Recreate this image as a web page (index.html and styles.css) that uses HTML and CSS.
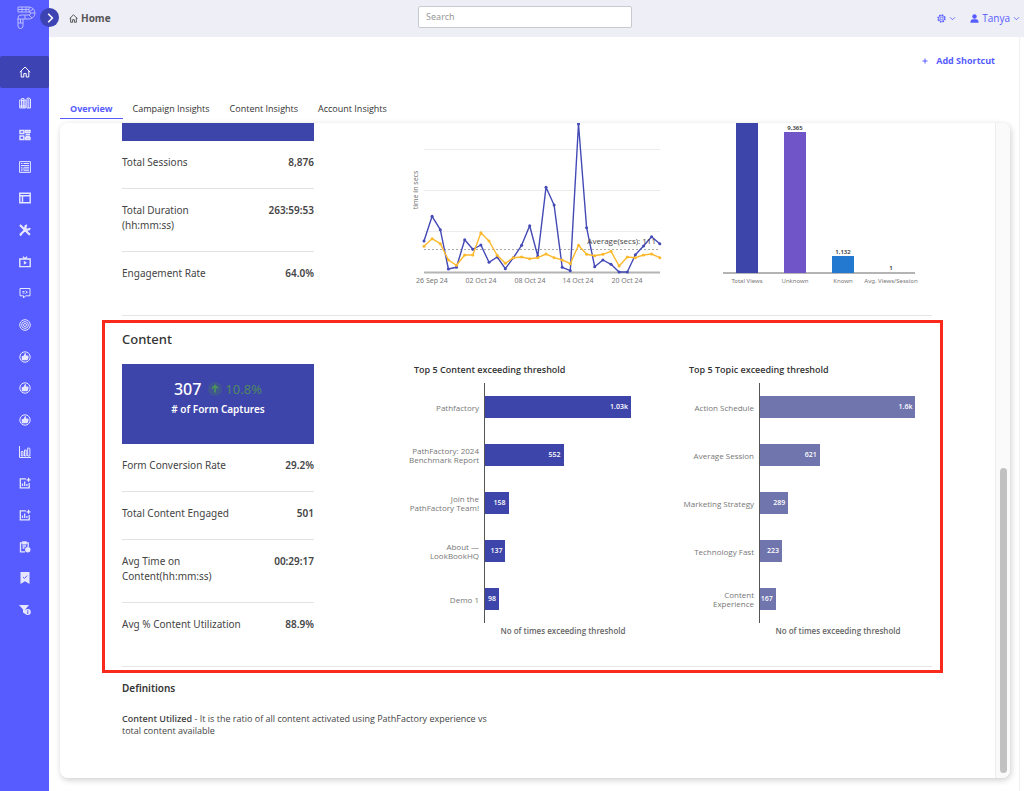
FILE: index.html
```html
<!DOCTYPE html>
<html lang="en">
<head>
<meta charset="utf-8">
<meta name="viewport" content="width=device-width, initial-scale=1">
<title>Home</title>
<link rel="stylesheet" href="styles.css">
</head>
<body>
<div class="app">
  <aside class="sidebar">
    <svg class="logo" viewBox="0 0 20 24" aria-label="Logo"><path d="M1 1h11a6 6 0 0 1 0 12H6v7a2.500 2.500 0 0 1-5 0v-7h5M1 1v5h11a1.500 1.500 0 0 1 0 3H4a3 3 0 0 0-3 3v2M5 1v5M9 1v5M12 1v5l4-3M13 7l5 0M12 9l3 3M8 9v4M1 17h5M3.500 13v4M1 3.500h11"/></svg>
    <button class="toggle" aria-label="Expand menu"><svg viewBox="0 0 10 10"><path d="M3.500 1.500 7 5 3.500 8.500"/></svg></button>
    <nav class="nav" aria-label="Main">
      <a href="#" class="nav-item active" aria-label="Home"><svg class="icon" viewBox="0 0 12 12"><path d="M.8 6.200 6 1l5.200 5.200M2.200 5v6h2.600V7.600h2.400V11h2.600V5"/></svg></a>
      <a href="#" class="nav-item" aria-label="Library"><svg class="icon" viewBox="0 0 12 12"><path d="M.7 3h2v8h-2zM2.700 1.500h2.200V11H2.700zM4.900 3h2v8h-2zM8 1.300l2-.3 1.500 1V11H8zM.7 9h6.200M2.700 3.500h2.200M9.800 2v9"/></svg></a>
      <a href="#" class="nav-item" aria-label="Boards"><svg class="icon bold" viewBox="0 0 12 12"><path d="M1 1.500h3.800v3H1zM1 7h3.800v3.500H1zM6.500 1.500H11v1.800H6.500zM6.500 5.200H11M6.500 7.200H11M6.500 8.800H11v1.700H6.500z"/></svg></a>
      <a href="#" class="nav-item" aria-label="Forms"><svg class="icon" viewBox="0 0 12 12"><path d="M.6.600h10.800v10.800H.6zM2 2.500h1.500M4.500 2.500H10M2 4.500h8M2 6.300h1.500M4.500 6.300H10M2 8h8M2 9.700h1.500M4.500 9.700H10"/></svg></a>
      <a href="#" class="nav-item" aria-label="Pages"><svg class="icon bold" viewBox="0 0 12 12"><path d="M.8 1.300h10.400v9.400H.8zM.8 3.800h10.400M3.500 4v6.500"/></svg></a>
      <a href="#" class="nav-item" aria-label="Tools"><svg class="icon heavy" viewBox="0 0 12 12"><path d="M1.200 1.200 10.800 10.800M1.200 10.800 7.500 4.500M8 1.200a2.300 2.300 0 1 0 2.800 2.800M1 2.400 2.400 1M1 10l1.500 1.400M9.500 10.800l1.300-1.300"/></svg></a>
      <a href="#" class="nav-item" aria-label="Videos"><svg class="icon bold" viewBox="0 0 12 12"><path d="M.8 3h10.400v7.600H.8zM4 .6 6 3 8 .6"/><path class="fill" d="M4.800 4.800v4L8 6.800z"/></svg></a>
      <a href="#" class="nav-item" aria-label="Messages"><svg class="icon" viewBox="0 0 12 12"><path d="M1 1.500h10v7.300H6.500L4.500 11V8.800H1zM3.500 4.500h2M3.500 6h2M6.500 3.700 8 5.200 6.500 6.700M7 5.200h1.500"/></svg></a>
      <a href="#" class="nav-item" aria-label="Targets"><svg class="icon" viewBox="0 0 12 12"><circle cx="6" cy="6" r="5.300"/><circle cx="6" cy="6" r="3.400"/><circle cx="6" cy="6" r="1.500"/></svg></a>
      <a href="#" class="nav-item" aria-label="Likes"><svg class="icon" viewBox="0 0 12 12"><circle cx="6" cy="6" r="5.200"/><path class="fill" d="M2.800 5h1.700L6 2c1.300.1 1.200 1.200.8 2.500h2.400c.8.900.1 4.300-1.100 4.800H2.800z"/></svg></a>
      <a href="#" class="nav-item" aria-label="Recommendations"><svg class="icon" viewBox="0 0 12 12"><circle cx="6" cy="6" r="5.200"/><path class="fill" d="M2.800 5h1.700L6 2c1.300.1 1.200 1.200.8 2.500h2.400c.8.900.1 4.300-1.100 4.800H2.800z"/></svg></a>
      <a href="#" class="nav-item" aria-label="Engagement"><svg class="icon" viewBox="0 0 12 12"><circle cx="6" cy="6" r="5.200"/><path class="fill" d="M2.800 5h1.700L6 2c1.300.1 1.200 1.200.8 2.500h2.400c.8.900.1 4.300-1.100 4.800H2.800z"/></svg></a>
      <a href="#" class="nav-item" aria-label="Analytics"><svg class="icon" viewBox="0 0 12 12"><path d="M.5 0v11.500h11.500M2.300 5.500h1.700v4.500H2.300zM5.500 4h1.700v6H5.500zM8.700 2h1.200a1 1 0 0 1 1 1V10H8.700z"/></svg></a>
      <a href="#" class="nav-item" aria-label="Reports"><svg class="icon" viewBox="0 0 12 12"><path class="mid" d="M7 1.800H1.300v9h8.900V6M3.500 9V6.500M5.700 9V4.500M7.900 9V7M9.500.8v4M7.500 2.800h4"/></svg></a>
      <a href="#" class="nav-item" aria-label="Custom reports"><svg class="icon" viewBox="0 0 12 12"><path class="mid" d="M7 1.800H1.300v9h8.900V6M3.500 9V6.500M5.700 9V4.500M7.900 9V7M9.500.8v4M7.500 2.800h4"/></svg></a>
      <a href="#" class="nav-item" aria-label="Tasks"><svg class="icon" viewBox="0 0 12 12"><path class="mid" d="M6 10.800H1.500V1.800h7.700V6M3.800.8H7v2H3.800zM3.500 5H7M3.500 7h2"/><circle class="fill" cx="8.800" cy="8.800" r="2.700"/></svg></a>
      <a href="#" class="nav-item" aria-label="Bookmarks"><svg class="icon" viewBox="0 0 12 12"><path class="fill" d="M1.500 0h9v12L6 9.300 1.500 12z"/><path class="cut" d="M4 5l1.500 1.400L8.200 3.600"/></svg></a>
      <a href="#" class="nav-item" aria-label="Filters"><svg class="icon" viewBox="0 0 12 12"><path class="fill" d="M0 1h10L6.500 5.200v5L4 8.500V5.500z"/><circle class="fill" cx="8.800" cy="8" r="3"/><path class="cut" d="M8.800 6.200V10"/></svg></a>
    </nav>
  </aside>

  <div class="main">
    <header class="topbar">
      <h1 class="crumb"><svg class="icon" viewBox="0 0 12 12"><path d="M.8 6.200 6 1l5.200 5.200M2.200 5v6h2.600V7.600h2.400V11h2.600V5"/></svg>Home</h1>
      <input class="search" type="search" placeholder="Search" aria-label="Search">
      <div class="account">
        <button class="link" aria-label="Settings">
          <svg class="icon" viewBox="0 0 12 12"><circle class="cog" cx="6" cy="6" r="4.600"/><circle cx="6" cy="6" r="3.800"/><circle cx="6" cy="6" r="1.700"/></svg>
          <svg class="caret" viewBox="0 0 8 6"><path d="M1 1.500 4 4.500 7 1.500"/></svg>
        </button>
        <button class="link">
          <svg class="icon" viewBox="0 0 12 12"><circle class="fill" cx="6" cy="3.400" r="3"/><path class="fill" d="M.5 11.800C.5 8.500 2 7 4 7h4c2 0 3.500 1.500 3.500 4.800z"/></svg>
          <span class="user">Tanya</span>
          <svg class="caret" viewBox="0 0 8 6"><path d="M1 1.500 4 4.500 7 1.500"/></svg>
        </button>
      </div>
    </header>

    <main class="page">
      <div class="actions"><button class="link strong"><svg class="plus" viewBox="0 0 6 6"><path d="M3 .5v5M.5 3h5"/></svg>Add Shortcut</button></div>
      <nav class="tabs" aria-label="Insights">
        <a href="#" class="tab current">Overview</a>
        <a href="#" class="tab">Campaign Insights</a>
        <a href="#" class="tab">Content Insights</a>
        <a href="#" class="tab">Account Insights</a>
      </nav>

      <div class="panel">
        <div class="scroll-area">
          <section class="section sessions">
            <div class="stats">
              <div class="card-end"></div>
              <dl class="stat-list">
                <div class="stat"><dt>Total Sessions</dt><dd>8,876</dd></div>
                <div class="stat"><dt>Total Duration (hh:mm:ss)</dt><dd>263:59:53</dd></div>
                <div class="stat"><dt>Engagement Rate</dt><dd>64.0%</dd></div>
              </dl>
            </div>
            <div class="trend-charts">
              <svg class="line-chart" viewBox="10 8 256 165" role="img" aria-label="Session time in seconds by day">
                <defs>
                  <marker id="dot-blue" markerWidth="4" markerHeight="4" refX="2" refY="2" markerUnits="userSpaceOnUse"><circle class="dot-blue" cx="2" cy="2" r="1.500"/></marker>
                  <marker id="dot-gold" markerWidth="4" markerHeight="4" refX="2" refY="2" markerUnits="userSpaceOnUse"><circle class="dot-gold" cx="2" cy="2" r="1.500"/></marker>
                </defs>
                <path class="gridline" d="M24 34.500h236M24 75.500h236M24 116.500h236"/>
                <path class="base" d="M24 157.500h236"/>
                <path class="average" d="M24 134.500h236"/>
                <polyline class="series blue" points="24,126 32.1,101.3 40.3,114.7 48.4,154 56.5,152.3 64.7,124.7 72.8,134.3 80.9,130 89,147.3 97.2,142 105.3,153.7 113.4,142.7 121.6,130.3 129.7,110.7 137.8,141.3 146,72.3 154.1,90 162.2,152.3 170.3,155.7 178.5,9 186.6,112.7 194.7,151.7 202.9,145 211,149.3 219.1,157 227.3,157 235.4,139.7 243.5,131 251.6,121.7 259.8,128.7"/>
                <polyline class="series gold" points="24,131.3 32.1,123.7 40.3,128.7 48.4,145 56.5,150.3 64.7,140 72.8,140 80.9,117.7 89,126 97.2,140.3 105.3,148.3 113.4,142.7 121.6,142 129.7,143.7 137.8,142.7 146,139 154.1,142.7 162.2,145 170.3,148.7 178.5,130.3 186.6,139.3 194.7,140.7 202.9,139.3 211,136.3 219.1,151 227.3,142 235.4,142.7 243.5,140 251.6,139 259.8,142.7"/>
                <text class="note" x="256" y="129" text-anchor="end">Average(secs): 111</text>
                <text class="tick" transform="translate(18 75) rotate(-90)" text-anchor="middle">time in secs</text>
                <g class="tick" text-anchor="middle"><text x="32" y="168">26 Sep 24</text><text x="81" y="168">02 Oct 24</text><text x="130" y="168">08 Oct 24</text><text x="178" y="168">14 Oct 24</text><text x="227" y="168">20 Oct 24</text></g>
              </svg>
              <svg class="bar-chart" viewBox="0 0 200 165" role="img" aria-label="Views by visitor type">
                <path class="base" d="M5 150h192"/>
                <rect class="total" x="18" y="0" width="22" height="150"/>
                <rect class="unknown" x="66" y="9" width="22" height="141"/>
                <rect class="known" x="114" y="133" width="22" height="17"/>
                <g class="value" text-anchor="middle"><text x="77" y="7">9,365</text><text x="125" y="131">1,132</text><text x="173" y="147">1</text></g>
                <g class="tick small" text-anchor="middle"><text x="29" y="160">Total Views</text><text x="77" y="160">Unknown</text><text x="125" y="160">Known</text><text x="173" y="160">Avg. Views/Session</text></g>
              </svg>
            </div>
          </section>

          <section class="section content">
            <h2 class="title">Content</h2>
            <div class="columns">
              <div class="stats">
                <div class="card">
                  <div class="card-figures"><strong class="figure">307</strong><svg class="up" viewBox="0 0 14 14"><circle cx="7" cy="7" r="7"/><path d="M7 10.500v-7M4 6.500l3-3 3 3"/></svg><span class="change">10.8%</span></div>
                  <div class="card-label"># of Form Captures</div>
                </div>
                <dl class="stat-list">
                  <div class="stat"><dt>Form Conversion Rate</dt><dd>29.2%</dd></div>
                  <div class="stat"><dt>Total Content Engaged</dt><dd>501</dd></div>
                  <div class="stat"><dt>Avg Time on Content(hh:mm:ss)</dt><dd>00:29:17</dd></div>
                  <div class="stat"><dt>Avg % Content Utilization</dt><dd>88.9%</dd></div>
                </dl>
              </div>
              <div class="rank-charts">
                <figure class="rank">
                  <h3 class="rank-title">Top 5 Content exceeding threshold</h3>
                  <div class="rows">
                    <div class="row"><span class="name">Pathfactory</span><div class="plot"><div class="bar" style="width:93%">1.03k</div></div></div>
                    <div class="row"><span class="name">PathFactory: 2024<br>Benchmark Report</span><div class="plot"><div class="bar" style="width:50%">552</div></div></div>
                    <div class="row"><span class="name">Join the<br>PathFactory Team!</span><div class="plot"><div class="bar" style="width:15%">158</div></div></div>
                    <div class="row"><span class="name">About —<br>LookBookHQ</span><div class="plot"><div class="bar" style="width:13%">137</div></div></div>
                    <div class="row"><span class="name">Demo 1</span><div class="plot"><div class="bar" style="width:9%">98</div></div></div>
                  </div>
                  <figcaption class="axis-label">No of times exceeding threshold</figcaption>
                </figure>
                <figure class="rank topics">
                  <h3 class="rank-title">Top 5 Topic exceeding threshold</h3>
                  <div class="rows">
                    <div class="row"><span class="name">Action Schedule</span><div class="plot"><div class="bar" style="width:99%">1.6k</div></div></div>
                    <div class="row"><span class="name">Average Session</span><div class="plot"><div class="bar" style="width:38%">621</div></div></div>
                    <div class="row"><span class="name">Marketing Strategy</span><div class="plot"><div class="bar" style="width:18%">289</div></div></div>
                    <div class="row"><span class="name">Technology Fast</span><div class="plot"><div class="bar" style="width:14%">223</div></div></div>
                    <div class="row"><span class="name">Content<br>Experience</span><div class="plot"><div class="bar" style="width:10%">167</div></div></div>
                  </div>
                  <figcaption class="axis-label">No of times exceeding threshold</figcaption>
                </figure>
              </div>
            </div>
            <div class="highlight"></div>
          </section>

          <section class="definitions">
            <h3 class="subtitle">Definitions</h3>
            <p class="definition"><strong>Content Utilized</strong> - It is the ratio of all content activated using PathFactory experience vs total content available</p>
          </section>
        </div>
        <div class="track"><div class="thumb"></div></div>
      </div>
    </main>
  </div>
</div>
</body>
</html>
```

FILE: styles.css
```css
* { box-sizing: border-box; }
body { margin: 0; font-family: "Noto Sans", "Open Sans", sans-serif; font-size: 10px; line-height: 15px; color: #444; background: #fff; }
h1, h2, h3, p, dl, dd, figure { margin: 0; }
a { text-decoration: none; color: inherit; }
button { font: inherit; border: 0; padding: 0; background: none; cursor: pointer; }
svg { fill: none; display: block; }
.crumb, .link, .tabs, .rank-title, .name, .bar, .axis-label, .note, .definition { font-family: "Open Sans", "Noto Sans", sans-serif; }

.app { display: flex; min-height: 100vh; }

/* Sidebar */
.sidebar { position: relative; width: 49px; flex: none; background: #565cff; }
.logo { width: 20px; height: 24px; margin: 6px 0 26px 17px; stroke: #b9bbff; stroke-width: 1; }
.toggle { position: absolute; top: 8px; right: -10px; width: 19px; height: 19px; border-radius: 50%; background: #3e43b4; display: grid; place-items: center; z-index: 2; }
.toggle svg { width: 12px; height: 12px; stroke: #fff; stroke-width: 1.300; }
.nav { display: grid; grid-template-rows: repeat(18, 1fr); height: 570px; color: #e6e7ff; }
.nav-item { display: grid; place-items: center; }
.nav-item.active { background: #3e43b4; border-radius: 2px; color: #fff; }
.icon { width: 12px; height: 12px; flex: none; stroke: currentColor; stroke-width: 1; }
.icon.bold { stroke-width: 1.400; }
.icon.heavy { stroke-width: 2.200; }
.icon .mid { stroke-width: 1.300; }
.icon .fill { fill: currentColor; stroke: none; }
.icon .cut { stroke: #565cff; }
.icon .cog { stroke-width: 2; stroke-dasharray: 2 1.600; }

/* Top bar */
.main { flex: 1; min-width: 0; display: flex; flex-direction: column; }
.topbar { display: grid; grid-template-columns: minmax(0, 9fr) 214px minmax(0, 10fr); align-items: center; height: 37px; padding: 0 4px 3px 20px; background: #eeeef7; }
.crumb { display: flex; align-items: center; gap: 3px; font-size: 10px; font-weight: 700; color: #555; padding-top: 3px; }
.crumb .icon { width: 9px; height: 9px; stroke-width: 1.300; }
.search { width: 100%; height: 22px; padding: 0 7px 1px; border: 1px solid #c9c9d0; border-radius: 2px; background: #fff; font: inherit; font-size: 9px; }
.search::placeholder { color: #999; opacity: 1; }
.account { display: flex; justify-content: flex-end; gap: 14px; padding-top: 3px; }
.link { display: flex; align-items: center; gap: 3px; font-size: 9px; color: #565cff; }
.link.strong { font-weight: 700; gap: 8px; }
.account .icon { width: 9px; height: 9px; }
.user { font-size: 10px; }
.caret { width: 7px; height: 5px; stroke: currentColor; stroke-width: 1; }
.plus { width: 6px; height: 6px; stroke: currentColor; stroke-width: 1; }

/* Page */
.page { flex: 1; display: flex; flex-direction: column; margin-right: 4px; padding: 16px 9px 13px 11px; border-right: 1px solid #f0f0f0; }
.actions { display: flex; justify-content: flex-end; padding-right: 15px; }
.tabs { display: flex; margin-top: 32px; font-size: 9px; }
.tab { padding: 1px 10px 2px; color: #333; }
.tab.current { font-weight: 700; color: #565cff; border-bottom: 1px solid #565cff; }
.panel { flex: 1; display: flex; margin-top: 4px; border-radius: 8px; overflow: hidden; box-shadow: 1px 2px 6px rgba(0, 0, 0, .2); }
.scroll-area { flex: 1; min-width: 0; padding: 0 63px 0 62px; }
.track { width: 15px; flex: none; display: flex; align-items: flex-end; padding: 0 3px 5px 4px; background: #fafafa; border-left: 1px solid #ececec; }
.thumb { width: 100%; height: 47%; border-radius: 4px; background: #c1c1c1; }

.section { border-bottom: 1px solid #e6e6e6; }
.sessions, .columns { display: flex; }
.sessions { padding-bottom: 16px; }
.stats { width: 192px; flex: none; }
.card-end { height: 18px; background: #3e45aa; }
.stat { display: flex; justify-content: space-between; align-items: flex-start; padding: 14px 0 18px; border-bottom: 1px solid #e2e2e2; }
.stat:last-child { border-bottom: 0; }
.stat dt { max-width: 124px; }
.sessions .stat dt { max-width: 90px; }
.stat dd { font-weight: 600; color: #444; }

.trend-charts { flex: 1; display: flex; align-items: flex-start; justify-content: space-between; gap: 52px; padding: 0 14px 0 96px; }
.line-chart { flex: 256; min-width: 0; }
.bar-chart { flex: 200; min-width: 0; overflow: hidden; }
.gridline { stroke: #ececec; }
.base { stroke: #b4b4b4; stroke-width: 2; }
.average { stroke: #aaa; stroke-dasharray: 2 2; }
.series { stroke-width: 1.400; stroke-linejoin: round; }
.blue { stroke: #4349b5; marker: url(#dot-blue); }
.gold { stroke: #fdb92e; marker: url(#dot-gold); }
.dot-blue { fill: #4349b5; }
.dot-gold { fill: #fdb92e; }
.note { fill: #444; font-size: 8px; }
.tick { fill: #777; font-size: 7px; }
.tick.small { font-size: 6px; }
.value { fill: #333; font-size: 6px; font-weight: 600; }
.total { fill: #3e45aa; }
.unknown { fill: #7055c8; }
.known { fill: #2378cf; }

.content { position: relative; padding: 16px 0; }
.highlight { position: absolute; inset: 4px -11px -7px -20px; border: 3px solid #f9291c; pointer-events: none; }
.title { font-size: 13px; font-weight: 500; color: #333; }
.columns { margin-top: 17px; }
.card { height: 80px; padding-top: 15px; background: #3e45aa; color: #fff; text-align: center; }
.card-figures { display: flex; justify-content: center; align-items: center; line-height: 20px; }
.figure { font-size: 16px; font-weight: 500; margin-right: 7px; }
.up { width: 14px; height: 14px; margin-right: 3px; stroke: #4c9a55; stroke-width: 1.500; }
.up circle { fill: #405592; stroke: none; }
.change { font-size: 13px; color: #4d8862; }
.card-label { font-weight: 600; line-height: 20px; }

.rank-charts { flex: 1; display: flex; gap: 47px; padding: 0 15px 0 100px; }
.rank { flex: 1; min-width: 0; }
.rank-title { font-size: 9px; line-height: 12px; font-weight: 600; color: #333; white-space: nowrap; }
.rows { margin-top: 7px; }
.row { display: grid; grid-template-columns: 65px 1fr; gap: 5px; align-items: center; }
.name { font-size: 8px; line-height: 9px; color: #777; text-align: right; white-space: nowrap; justify-self: end; }
.plot { height: 48px; padding: 13px 0; border-left: 1px solid #555; }
.bar { height: 22px; padding-right: 3px; background: #3e45aa; color: #fff; font-size: 7px; line-height: 22px; font-weight: 600; text-align: right; }
.topics .bar { background: #7175ae; }
.axis-label { margin-left: 70px; font-size: 8px; font-weight: 600; color: #666; text-align: center; line-height: 15px; white-space: nowrap; }

.definitions { padding: 14px 0; }
.subtitle { font-size: 10px; line-height: 15px; font-weight: 600; color: #333; }
.definition { margin-top: 17px; max-width: 368px; font-size: 9px; line-height: 12px; }
.definition strong { font-weight: 600; }
```
